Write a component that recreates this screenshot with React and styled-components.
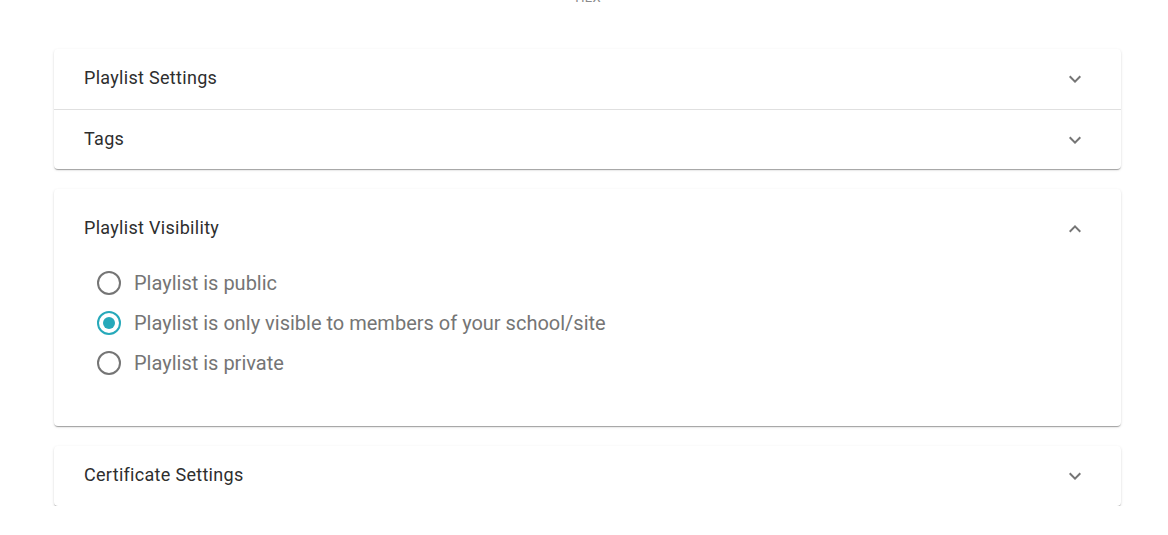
import React, { useState } from "react";
import styled, { createGlobalStyle } from "styled-components";

const GlobalStyle = createGlobalStyle`
  body {
    margin: 0;
    background: #fff;
    font-family: Roboto, "Liberation Sans", sans-serif;
  }
`;

const Page = styled.div`
  width: 1067px;
  margin-left: 54px;
  display: flex;
  flex-direction: column;
  gap: 20px;
`;

const TopLabel = styled.div`
  height: 49px;
  display: flex;
  justify-content: center;
  align-items: flex-start;
  overflow: hidden;
  span {
    margin-top: -10px;
    margin-left: 8px;
    font-size: 13px;
    color: #8a8a8a;
    letter-spacing: 0.3px;
  }
`;

const Card = styled.div`
  background: #fff;
  border-radius: 4px;
  box-shadow: 0px 2px 1px -1px rgba(0, 0, 0, 0.2),
    0px 1px 1px 0px rgba(0, 0, 0, 0.14), 0px 1px 3px 0px rgba(0, 0, 0, 0.12);
`;

const Summary = styled.div`
  height: ${({ tall }) => (tall ? "74px" : "60px")};
  padding: 0 34px 0 30px;
  display: flex;
  align-items: center;
  justify-content: space-between;
  cursor: pointer;
  & + & {
    border-top: 1px solid #e0e0e0;
    height: 59px;
  }
`;

const Title = styled.span`
  font-size: 18px;
  letter-spacing: 0.3px;
  color: #2e2e2e;
  padding: ${({ tall }) => (tall ? "2px 0 0" : "0 0 3px")};
`;

const Details = styled.div`
  padding: 0 0 43px 42px;
  display: flex;
  flex-direction: column;
`;

const RadioRow = styled.label`
  height: 40px;
  display: flex;
  align-items: center;
  gap: 12px;
  cursor: pointer;
  font-size: 20px;
  color: #757575;
`;

const ChevronSvg = styled.svg`
  flex-shrink: 0;
  transform: ${({ up }) => (up ? "translateY(3px) rotate(180deg)" : "none")};
`;

const Chevron = ({ up }) => (
  <ChevronSvg up={up ? 1 : 0} width="24" height="24" viewBox="0 0 24 24" fill="#757575">
    <path d="M16.59 8.59L12 13.17 7.41 8.59 6 10l6 6 6-6z" />
  </ChevronSvg>
);

const RadioIcon = ({ checked }) => (
  <svg width="26" height="26" viewBox="0 0 26 26">
    <circle
      cx="13"
      cy="13"
      r="11"
      fill="none"
      stroke={checked ? "#26a9ba" : "#757575"}
      strokeWidth="2"
    />
    {checked && <circle cx="13" cy="13" r="6" fill="#26a9ba" />}
  </svg>
);

const options = [
  "Playlist is public",
  "Playlist is only visible to members of your school/site",
  "Playlist is private",
];

export default function App() {
  const [visibility, setVisibility] = useState(1);
  return (
    <>
      <GlobalStyle />
      <TopLabel>
        <span>HEX</span>
      </TopLabel>
      <Page>
        <Card>
          <Summary>
            <Title>Playlist Settings</Title>
            <Chevron />
          </Summary>
          <Summary>
            <Title>Tags</Title>
            <Chevron />
          </Summary>
        </Card>
        <Card>
          <Summary tall>
            <Title tall>Playlist Visibility</Title>
            <Chevron up />
          </Summary>
          <Details>
            {options.map((o, i) => (
              <RadioRow key={o} onClick={() => setVisibility(i)}>
                <RadioIcon checked={visibility === i} />
                {o}
              </RadioRow>
            ))}
          </Details>
        </Card>
        <Card>
          <Summary>
            <Title>Certificate Settings</Title>
            <Chevron />
          </Summary>
        </Card>
      </Page>
    </>
  );
}
